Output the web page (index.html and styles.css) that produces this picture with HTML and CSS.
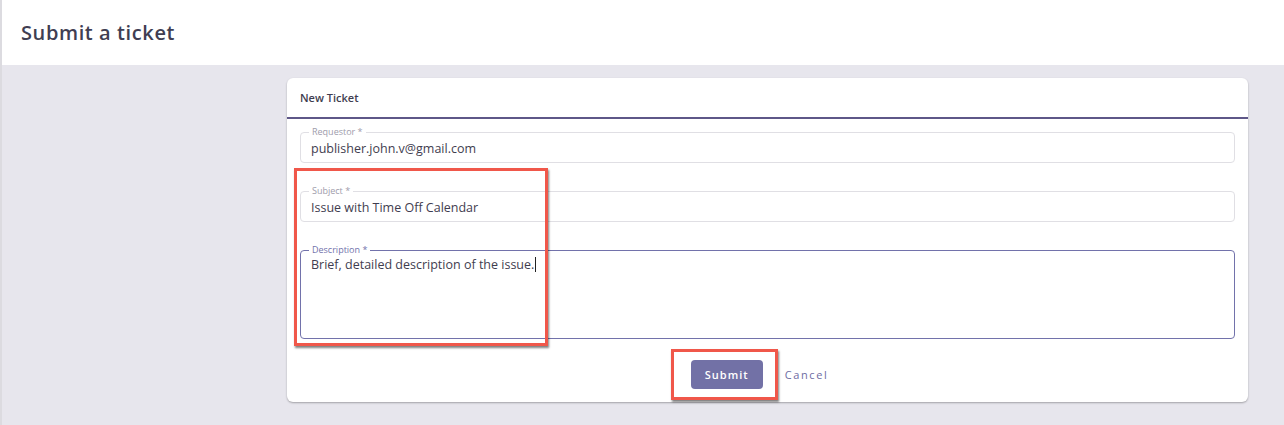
FILE: index.html
```html
<!DOCTYPE html>
<html>
<head>
    <title>Submit a ticket</title>
    <link rel="stylesheet" href="styles.css">
</head>
<body>
    <div class="page-header">
        <h1>Submit a ticket</h1>
    </div>

    <div class="content">
        <div class="card">
            <div class="card-title">New Ticket</div>
            <div class="card-body">
                <fieldset class="field">
                    <legend>Requestor *</legend>
                    <div class="value">publisher.john.v@gmail.com</div>
                </fieldset>
                <fieldset class="field">
                    <legend>Subject *</legend>
                    <div class="value">Issue with Time Off Calendar</div>
                </fieldset>
                <fieldset class="field field-focus">
                    <legend>Description *</legend>
                    <div class="value textarea">Brief, detailed description of the issue.<span class="caret"></span></div>
                </fieldset>
                <div class="actions">
                    <button class="btn-submit">Submit</button>
                    <button class="btn-cancel">Cancel</button>
                </div>
            </div>
        </div>
    </div>

    <!-- annotation boxes drawn over the screenshot -->
    <div class="mark mark-fields"></div>
    <div class="mark mark-submit"></div>
</body>
</html>
```

FILE: styles.css
```css
body {
    margin: 0;
    font-family: "Open Sans", "Noto Sans", sans-serif;
    color: #3f3d4f;
    background-color: #e7e6ed;
    border-left: 2px solid #dcdbe0;
    height: 425px;
    overflow: hidden;
}
.page-header {
    background-color: #fff;
    height: 65px;
    padding-left: 19px;
    display: flex;
    align-items: center;
}
.page-header h1 {
    margin: 0;
    font-size: 20px;
    font-weight: 600;
    color: #403e52;
    letter-spacing: 0.6px;
}
.content {
    padding: 13px 36px 20px 285px;
}
.card {
    background-color: #fff;
    border-radius: 6px;
    box-shadow: 0 1px 2px rgba(0, 0, 0, 0.3);
}
.card-title {
    height: 39px;
    padding: 0 13px;
    display: flex;
    align-items: center;
    font-size: 11px;
    font-weight: 600;
    color: #3f3d4f;
    border-bottom: 2px solid #5e5788;
}
.card-body {
    padding: 7px 13px 13px;
}
.field {
    margin: 0 0 22px;
    padding: 2px 10px 4px;
    border: 1px solid #e0dfe4;
    border-radius: 4px;
    min-width: 0;
}
.field legend {
    font-size: 9px;
    line-height: 12px;
    color: #9e9cab;
    padding: 0 3px;
    margin-left: -2px;
}
.field-focus {
    border-color: #7272ab;
    padding-top: 0;
    margin-bottom: 21px;
}
.field-focus legend {
    color: #7272ab;
}
.value {
    font-size: 12.5px;
    line-height: 18px;
    color: #3f3d4f;
}
.textarea {
    height: 78px;
}
.caret {
    display: inline-block;
    width: 1px;
    height: 15px;
    background-color: #222;
    vertical-align: -3px;
    margin-left: 1px;
}
.actions {
    display: flex;
    justify-content: center;
    align-items: center;
    gap: 14px;
}
.btn-submit {
    width: 72px;
    height: 29px;
    border: none;
    border-radius: 4px;
    background-color: #7271a6;
    color: #fff;
    font-family: inherit;
    font-size: 11px;
    font-weight: 600;
    letter-spacing: 1px;
}
.btn-cancel {
    border: none;
    background: none;
    padding: 0 16px 0 8px;
    color: #6e6ca3;
    font-family: inherit;
    font-size: 11px;
    letter-spacing: 1.6px;
}
.mark {
    position: absolute;
    border: 3px solid #f0574a;
    box-shadow: 1px 2px 2px rgba(0, 0, 0, 0.5);
    box-sizing: border-box;
}
.mark-fields {
    left: 294px;
    top: 168px;
    width: 254px;
    height: 178px;
}
.mark-submit {
    left: 671px;
    top: 349px;
    width: 107px;
    height: 51px;
}
```
